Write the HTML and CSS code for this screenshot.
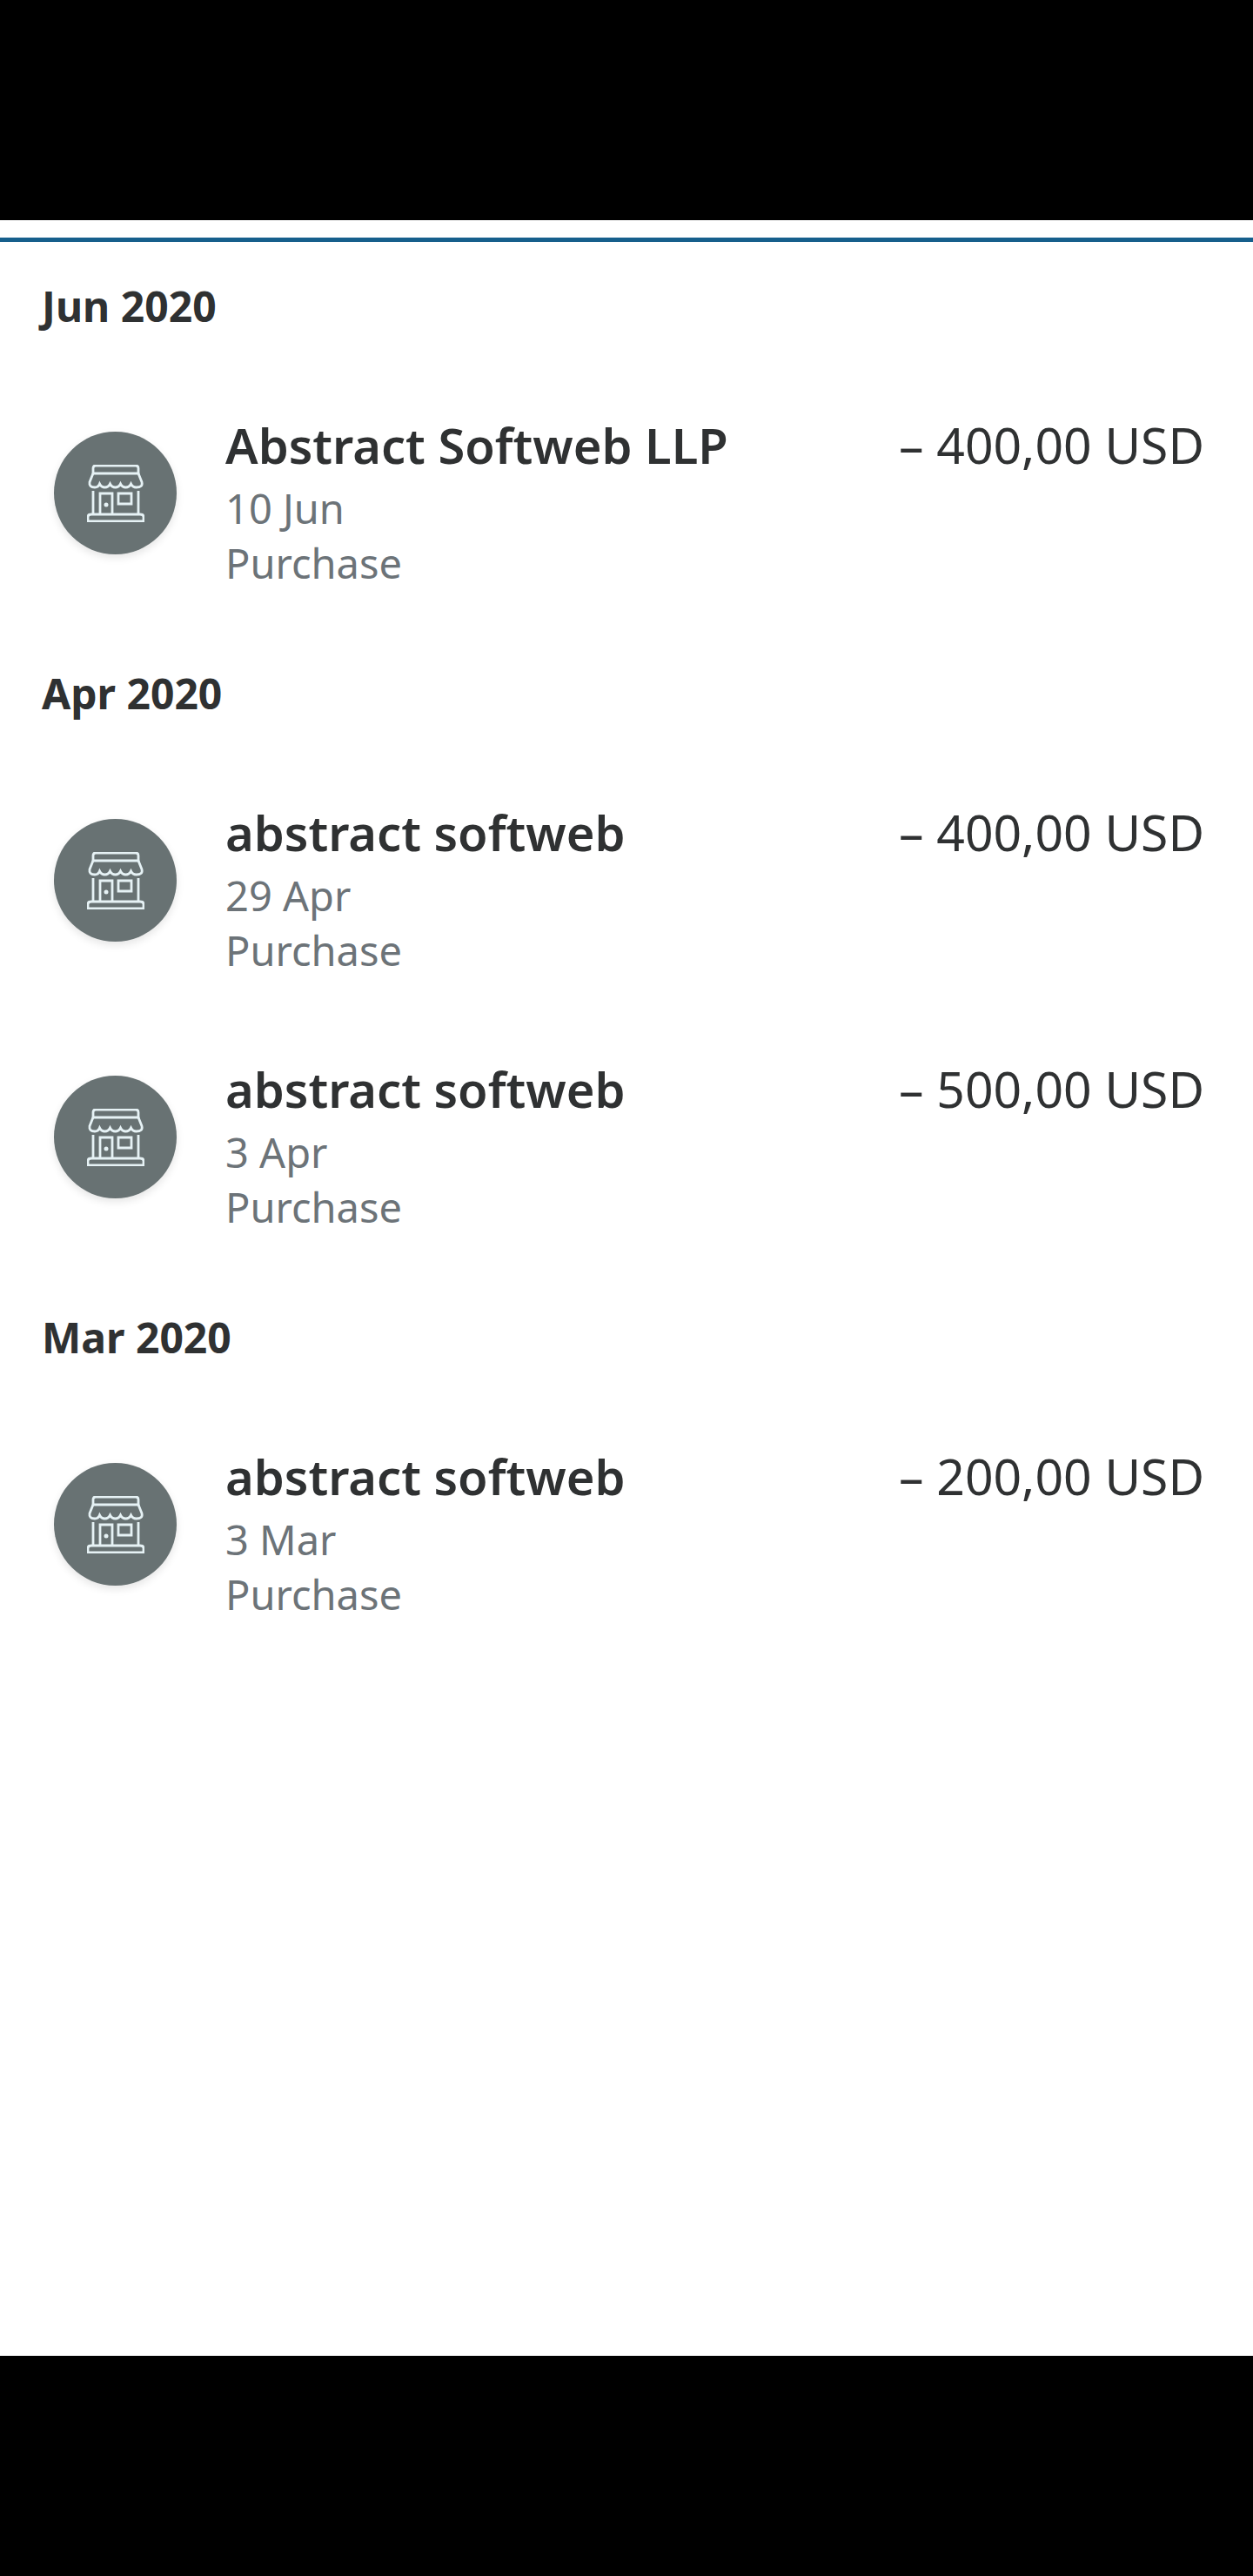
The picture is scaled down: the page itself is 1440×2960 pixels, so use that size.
FILE: index.html
```html
<!DOCTYPE html>
<html lang="en">
<head>
    <meta charset="UTF-8">
    <meta name="viewport" content="width=device-width, initial-scale=1.0">
    <title>Activity</title>
    <link rel="stylesheet" href="styles.css">
</head>
<body>
    <!-- shared store icon -->
    <svg class="sprite" aria-hidden="true">
        <symbol id="store" viewBox="0 0 66 66">
            <path d="M7 10V4q0-3 3-3h46q3 0 3 3v6z"/>
            <path d="M7 10L3 20q-1 6 6 6q4 0 5.500-4q2 4 6 4t6-4q2 4 6 4t6-4q2 4 6 4t6-4q2 4 6 4q8 0 6.500-6L59 10"/>
            <path d="M7 30v27M59 30v27"/>
            <path d="M15 57V33h14v24"/>
            <path d="M36 33h15v12H36z"/>
            <path d="M1 65v-5q0-3 4-3h56q4 0 4 3v5z"/>
            <circle class="knob" cx="22" cy="46" r="2.500"/>
        </symbol>
    </svg>

    <div class="bar"></div>

    <main class="activity">
        <section class="month">
            <h2 class="month-title">Jun 2020</h2>
            <div class="item">
                <div class="avatar"><svg class="icon"><use href="#store"/></svg></div>
                <div class="details">
                    <h3 class="name">Abstract Softweb LLP</h3>
                    <p class="meta">10 Jun</p>
                    <p class="meta">Purchase</p>
                </div>
                <div class="amount">– 400,00 USD</div>
            </div>
        </section>

        <section class="month">
            <h2 class="month-title">Apr 2020</h2>
            <div class="item">
                <div class="avatar"><svg class="icon"><use href="#store"/></svg></div>
                <div class="details">
                    <h3 class="name">abstract softweb</h3>
                    <p class="meta">29 Apr</p>
                    <p class="meta">Purchase</p>
                </div>
                <div class="amount">– 400,00 USD</div>
            </div>
            <div class="item">
                <div class="avatar"><svg class="icon"><use href="#store"/></svg></div>
                <div class="details">
                    <h3 class="name">abstract softweb</h3>
                    <p class="meta">3 Apr</p>
                    <p class="meta">Purchase</p>
                </div>
                <div class="amount">– 500,00 USD</div>
            </div>
        </section>

        <section class="month">
            <h2 class="month-title">Mar 2020</h2>
            <div class="item">
                <div class="avatar"><svg class="icon"><use href="#store"/></svg></div>
                <div class="details">
                    <h3 class="name">abstract softweb</h3>
                    <p class="meta">3 Mar</p>
                    <p class="meta">Purchase</p>
                </div>
                <div class="amount">– 200,00 USD</div>
            </div>
        </section>
    </main>

    <div class="bar"></div>
</body>
</html>
```
FILE: styles.css
```css
* {
    box-sizing: border-box;
    margin: 0;
    padding: 0;
}
body {
    display: flex;
    flex-direction: column;
    min-height: 100vh;
    font-family: "Noto Sans", "Open Sans", sans-serif;
    color: #2f3132;
    background: #fff;
}
.sprite {
    display: none;
}
.bar {
    height: 253px;
    background: #000;
}
.activity {
    flex: 1;
    display: flex;
    flex-direction: column;
    gap: 85px;
    padding-bottom: 85px;
}
/* blue rule above the list */
.activity::before {
    content: "";
    height: 5px;
    margin: 20px 0 -44px;
    background: #165f8c;
}
.month {
    display: flex;
    flex-direction: column;
    gap: 85px;
}
.month-title {
    padding: 0 48px;
    font-size: 48px;
    font-weight: 700;
    line-height: 65px;
}
.item {
    display: flex;
    align-items: flex-start;
    padding: 0 56px 0 62px;
}
.avatar {
    display: flex;
    align-items: center;
    justify-content: center;
    width: 141px;
    height: 141px;
    margin: 27px 56px 0 0;
    border-radius: 50%;
    background: #687273;
    box-shadow: 0 4px 10px rgba(0,0,0,0.1);
}
.icon {
    width: 66px;
    height: 66px;
    overflow: visible;
    fill: none;
    stroke: #e6f2f5;
    stroke-width: 2.8;
}
.knob {
    fill: #e6f2f5;
    stroke: none;
}
.details {
    flex: 1;
}
.name {
    font-size: 56px;
    font-weight: 600;
    line-height: 84px;
}
.meta {
    font-size: 47px;
    line-height: 63px;
    color: #6c7378;
}
.amount {
    font-size: 57px;
    line-height: 84px;
    white-space: nowrap;
}
```
